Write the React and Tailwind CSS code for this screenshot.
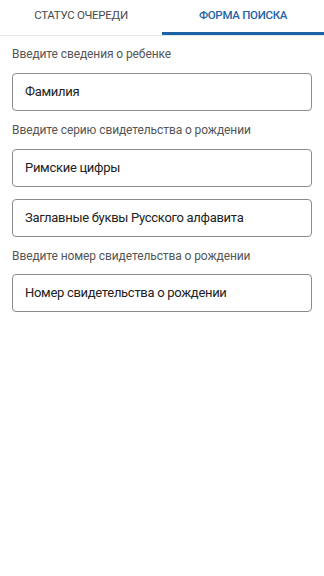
export default function App() {
  const font = { fontFamily: 'Roboto, "Noto Sans", sans-serif' };
  const input = "h-[38px] border border-[#8c8c8c] rounded-[4px] flex items-center px-3 text-[13px] tracking-[-0.3px] text-[#222222]";
  const label = "h-[18px] leading-[18px] text-[12px] tracking-[-0.1px] text-[#555555]";
  return (
    <div className="w-[324px] h-[576px] bg-white" style={font}>
      <div className="flex h-[36px] border-b border-[#e6e6e6]">
        <div className="flex-1 flex items-center justify-center text-[11.5px] tracking-[-0.3px] text-[#4a4a4a] pb-[3px]">
          СТАТУС ОЧЕРЕДИ
        </div>
        <div className="flex-1 flex flex-col">
          <div className="flex-1 flex items-center justify-center text-[11.5px] tracking-[-0.3px] font-medium text-[#1f64a8]">
            ФОРМА ПОИСКА
          </div>
          <div className="h-[3px] bg-[#1c62a6]" />
        </div>
      </div>
      <div className="px-3 pt-[9px] flex flex-col">
        <div className={`${label} mb-[10px]`}>Введите сведения о ребенке</div>
        <div className={`${input} mb-[10px]`}>Фамилия</div>
        <div className={`${label} mb-[10px]`}>Введите серию свидетельства о рождении</div>
        <div className={`${input} mb-[12px]`}>Римские цифры</div>
        <div className={`${input} mb-[10px]`}>Заглавные буквы Русского алфавита</div>
        <div className={`${label} mb-[9px]`}>Введите номер свидетельства о рождении</div>
        <div className={input}>Номер свидетельства о рождении</div>
      </div>
    </div>
  );
}
